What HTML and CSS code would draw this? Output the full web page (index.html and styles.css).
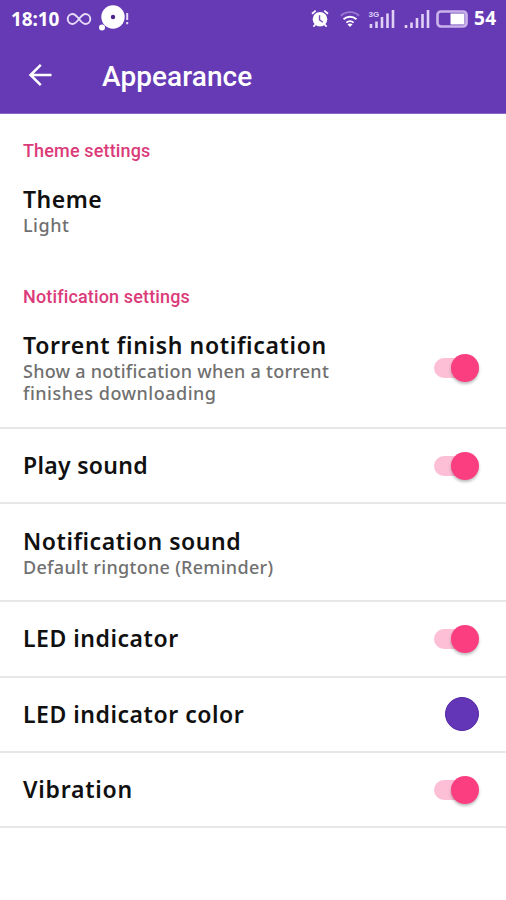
FILE: index.html
```html
<!DOCTYPE html>
<html lang="en">
<head>
<meta charset="utf-8">
<title>Appearance</title>
<link rel="stylesheet" href="styles.css">
</head>
<body>
<header class="header">
  <div class="status">
    <span class="clock">18:10</span>
    <svg class="loop" width="24" height="14" viewBox="0 0 24 14" fill="none" stroke="#e6dcf7" stroke-width="1.9"><path d="M12 7C9.5 3.8 8 2 5.700 2a5 5 0 0 0 0 10C8 12 9.500 10.200 12 7s4-5 6.300-5a5 5 0 0 1 0 10C16 12 14.500 10.200 12 7Z"/></svg>
    <svg class="disc" width="32" height="28" viewBox="0 0 32 28"><circle cx="15" cy="12" r="11.700" fill="#fff"/><circle cx="15" cy="12" r="2.200" fill="#4a2590"/><circle cx="4" cy="22.500" r="3" fill="#fff"/><path d="M29.200 8v7M29.200 17v2.200" stroke="#e6dcf7" stroke-width="2"/></svg>
    <span class="spacer"></span>
    <svg class="alarm" width="18" height="19" viewBox="0 0 19 19"><circle cx="9.500" cy="10.300" r="7.700" fill="#fff"/><path d="M1 4.500 5 1.200M18 4.500 14 1.200M4.500 16l-2 2M14.500 16l2 2" stroke="#fff" stroke-width="1.800"/><path d="M9 6v5l3.500 2.500" stroke="#7950b8" stroke-width="1.500" fill="none"/></svg>
    <svg class="wifi" width="20" height="18" viewBox="0 0 21 18" fill="none" stroke-width="2"><path d="M1 5.500C6.500.600 14.500.600 20 5.500" stroke="#9b7bd0"/><path d="M3.700 9.300c4-3.500 9.600-3.500 13.600 0M6.700 12.800c2.300-1.900 5.300-1.900 7.600 0" stroke="#fff"/><path d="m7.800 14.500 2.700 3 2.700-3q-2.700-1.800-5.400 0Z" fill="#fff"/></svg>
    <svg class="signal" width="26" height="20" viewBox="0 0 26 20"><path d="M2 15v4M7.500 12.500V19M13 8v11M18.500 4.500V19M24 1v18" stroke="#dfd0f5" stroke-width="2.600"/><text class="net" x="-.5" y="7.500">3G</text></svg>
    <svg class="signal" width="26" height="20" viewBox="0 0 26 20"><path d="M2 16v3M7.500 13.500V19M13 9v10M18.500 5V19M24 1v18" stroke="#dfd0f5" stroke-width="2.600"/></svg>
    <svg class="battery" width="32" height="18" viewBox="0 0 32 18"><rect x="1.500" y="1.500" width="29" height="15" rx="3.500" fill="none" stroke="#c9b3ea" stroke-width="2.700"/><path d="M14.500 3.500h14v11h-14z" fill="#fff"/></svg>
    <span class="level">54</span>
  </div>
  <div class="toolbar">
    <svg width="24" height="24" viewBox="0 0 24 24" fill="none" stroke="#fff" stroke-width="2.500"><path d="M23.500 12H2.500M12.800 1.800 2.500 12l10.300 10.200"/></svg>
    <h1>Appearance</h1>
  </div>
</header>
<main>
  <h2>Theme settings</h2>
  <section class="row plain">
    <div><div class="title t-theme">Theme</div><div class="sub s-light">Light</div></div>
  </section>
  <h2 class="second">Notification settings</h2>
  <section class="row tall">
    <div><div class="title t-torrent">Torrent finish notification</div><div class="sub s-show">Show a notification when a torrent<br><span class="s-finish">finishes downloading</span></div></div>
    <span class="switch"></span>
  </section>
  <section class="row"><div class="title t-play">Play sound</div><span class="switch"></span></section>
  <section class="row double">
    <div><div class="title t-notif">Notification sound</div><div class="sub s-default">Default ringtone (Reminder)</div></div>
  </section>
  <section class="row"><div class="title t-led">LED indicator</div><span class="switch"></span></section>
  <section class="row"><div class="title t-color">LED indicator color</div><span class="swatch"></span></section>
  <section class="row"><div class="title t-vib">Vibration</div><span class="switch"></span></section>
</main>
</body>
</html>
```
FILE: styles.css
```css
* { box-sizing: border-box; }
body { margin: 0; width: 506px; height: 900px; overflow: hidden; background: #fff; font-family: "Noto Sans", sans-serif; }
svg { display: block; flex: none; overflow: visible; }
.header { height: 114px; background: #673ab5; color: #fff; border-bottom: 1px solid #8a68c5; }
.status { height: 37px; display: flex; align-items: center; padding: 0 8px 0 11px; }
.clock, .level { font: 700 19px/36px "Noto Sans", sans-serif; }
.clock { width: 56px; letter-spacing: -0.1px; }
.level { width: 24px; letter-spacing: 0.4px; margin-top: -1px; }
.disc { margin: 0 0 0 7px; }
.spacer { flex: 1; }
.alarm { margin-right: 11px; }
.wifi { margin-right: 9px; }
.signal { margin-right: 9px; }
.signal + .battery { margin: 0 6px 0 -3px; }
.net { font: 700 8px "Liberation Sans", sans-serif; fill: #dfd0f5; }
.toolbar { height: 77px; display: flex; align-items: center; gap: 50px; padding: 0 0 1px 28px; }
h1 { margin: 4px 0 0; font: 500 28px/36px Roboto, sans-serif; letter-spacing: 0.08px; }
h2 { margin: 0; height: 48px; padding: 24px 23px 0; font: 500 18px/25px Roboto, sans-serif; letter-spacing: 0.15px; color: #db3b79; }
.row { height: 75.300px; display: flex; align-items: center; justify-content: space-between; padding: 0 27px 0 23px; border-bottom: 2px solid #e7e7e7; }
.plain { height: 98px; border-bottom: 0; padding-bottom: 2px; }
.tall { height: 121px; }
.double { height: 98px; }
.title { margin-top: -1px; font-size: 23px; line-height: 30px; font-weight: 600; color: #101010; white-space: nowrap; }
.sub { font-size: 18px; line-height: 22px; font-weight: 500; color: #707070; white-space: nowrap; }
.t-theme { letter-spacing: 0.5px; }
.t-torrent { letter-spacing: 0.65px; }
.t-play { letter-spacing: 0.3px; }
.t-notif { letter-spacing: 0.55px; }
.t-led, .t-color { letter-spacing: 0.53px; }
.t-vib { letter-spacing: 0.75px; }
.s-light { letter-spacing: 0.5px; }
.s-show { letter-spacing: 0.25px; }
.s-finish { letter-spacing: 0.5px; }
.s-default { letter-spacing: 0.3px; }
.switch { position: relative; width: 45px; height: 28px; display: flex; align-items: center; justify-content: flex-end; }
.switch::before { content: ""; position: absolute; left: 0; top: 4px; width: 38px; height: 20px; border-radius: 10px; background: #fdbfd6; }
.switch::after { content: ""; position: relative; width: 28px; height: 28px; border-radius: 50%; background: #fa3e80; box-shadow: 0 2px 3px #0004; }
.swatch { width: 34px; height: 34px; border-radius: 50%; background: #6335b7; border: 1px solid #5429a5; }
```
